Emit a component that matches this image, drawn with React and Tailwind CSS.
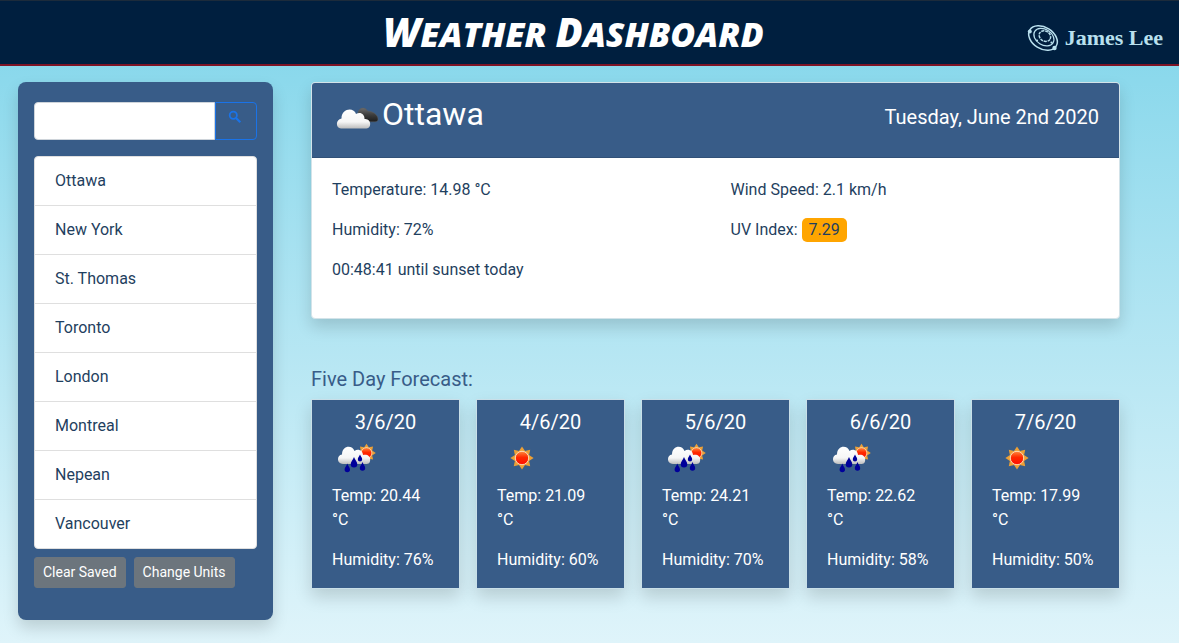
const cities = ["Ottawa", "New York", "St. Thomas", "Toronto", "London", "Montreal", "Nepean", "Vancouver"];

const forecast = [
  { date: "3/6/20", icon: "rain", temp: "20.44", humidity: 76 },
  { date: "4/6/20", icon: "sun", temp: "21.09", humidity: 60 },
  { date: "5/6/20", icon: "rain", temp: "24.21", humidity: 70 },
  { date: "6/6/20", icon: "rain", temp: "22.62", humidity: 58 },
  { date: "7/6/20", icon: "sun", temp: "17.99", humidity: 50 },
];

const SHADOW = "shadow-[0_8px_16px_rgba(0,0,0,0.15)]";
const RAY_ANGLES = [0, 45, 90, 135, 180, 225, 270, 315];

function Gradients() {
  return (
    <svg width="0" height="0" className="absolute" aria-hidden="true">
      <defs>
        <linearGradient id="cloud" x1="0" y1="0" x2="0" y2="1">
          <stop offset="0" stopColor="#ffffff" />
          <stop offset="0.65" stopColor="#f6f6f6" />
          <stop offset="1" stopColor="#bdbdbd" />
        </linearGradient>
        <linearGradient id="darkCloud" x1="0" y1="0" x2="0" y2="1">
          <stop offset="0" stopColor="#6c6c6c" />
          <stop offset="0.5" stopColor="#3c3c3c" />
          <stop offset="1" stopColor="#1d1d1d" />
        </linearGradient>
        <linearGradient id="sunDisc" x1="0" y1="0" x2="0" y2="1">
          <stop offset="0" stopColor="#ff8a3c" />
          <stop offset="0.45" stopColor="#ff2a00" />
          <stop offset="1" stopColor="#ff0d00" />
        </linearGradient>
      </defs>
    </svg>
  );
}

function SunShape() {
  return (
    <g>
      {RAY_ANGLES.map((a) => (
        <path key={a} d="M-3 -7 L0 -11.6 L3 -7 Z" fill="#eda035" transform={`rotate(${a})`} />
      ))}
      <circle r="7.6" fill="#f5a940" />
      <circle r="6.7" fill="url(#sunDisc)" stroke="#ffe3c4" strokeWidth="0.9" />
    </g>
  );
}

function WeatherIcon({ kind }) {
  return (
    <svg viewBox="0 1 50 50" className="block size-[50px] shrink-0" role="img" aria-label={kind}>
      {kind === "sun" && (
        <g transform="translate(25 25)">
          <SunShape />
        </g>
      )}
      {kind === "rain" && (
        <g>
          <g transform="translate(34.5 20) scale(0.8)">
            <SunShape />
          </g>
          <path
            d="M11 31 C4.500 31 4.500 22 10 21.500 C10 12 20.500 11.500 22.500 18 C26 15 31 17.500 31 22 C35 21 38.500 23 38.200 27 C38 30 36.500 31 34.500 31 Z"
            fill="url(#cloud)"
          />
          <g fill="#00009a">
            <path d="M22 24 C23 27 25.300 28.800 25.300 31.300 A3.300 3.300 0 0 1 18.700 31.300 C18.700 28.800 21 27 22 24 Z" />
            <path d="M28 21.500 C28.700 23.500 30.200 24.500 30.200 26.200 A2.200 2.200 0 0 1 25.800 26.200 C25.800 24.500 27.300 23.500 28 21.500 Z" />
            <path d="M15.300 30.500 C16.100 33 18 34.500 18 36.500 A2.700 2.700 0 0 1 12.600 36.500 C12.600 34.500 14.500 33 15.300 30.500 Z" />
            <path d="M30.500 29 C31.300 31.500 33.200 33 33.200 35 A2.700 2.700 0 0 1 27.800 35 C27.800 33 29.700 31.500 30.500 29 Z" />
          </g>
        </g>
      )}
      {kind === "clouds" && (
        <g transform="translate(0 -0.4)">
          <path
            d="M26 20 C26 14 33.500 12.500 35.500 17.500 C41 17.500 46 21.500 46 25.500 C46 27.500 45 28.200 43 28.200 L32 28.200 Z"
            fill="url(#darkCloud)"
            stroke="#5d5d5d"
            strokeWidth="0.5"
          />
          <path
            d="M9 34.800 C3.500 34.800 3.500 26 9.500 25 C9.500 14.500 22 13.500 24 20.500 C28 17.500 33 20.500 32.500 25.500 C39.500 24.500 40 34.800 34.500 34.800 Z"
            fill="url(#cloud)"
          />
        </g>
      )}
    </svg>
  );
}

function SearchIcon() {
  return (
    <svg viewBox="0 0 16 16" className="size-4" fill="none" stroke="currentColor" aria-hidden="true">
      <circle cx="6.300" cy="6.300" r="3.600" strokeWidth="1.800" />
      <path d="M9 9 L13.300 13.300" strokeWidth="2.200" />
    </svg>
  );
}

function OrbitLogo() {
  return (
    <svg viewBox="0 0 32 28" className="h-7 w-8 shrink-0" fill="none" stroke="#b9e0ee" aria-hidden="true">
      <g transform="rotate(32 16 14)">
        <ellipse cx="16" cy="14" rx="15.500" ry="10.800" strokeWidth="1.500" />
        <ellipse cx="16.300" cy="12.800" rx="10.800" ry="7.800" strokeWidth="1.200" />
        <ellipse cx="16.600" cy="11.400" rx="6" ry="5" strokeWidth="1.500" strokeDasharray="3 0.800" />
      </g>
      <g fill="#b9e0ee" stroke="none">
        <circle cx="2.800" cy="7.500" r="2" />
        <circle cx="27.500" cy="24" r="2.200" />
        <circle cx="10" cy="16.500" r="1.100" />
        <circle cx="24.500" cy="18.500" r="1.100" />
      </g>
    </svg>
  );
}

function Header() {
  return (
    <header className="flex h-[66px] items-center border-t border-b-2 border-t-[#1c2b3b] border-b-[#7d1426] bg-[#001f3f] pr-4 pl-[120px]">
      <h1 className="flex-1 text-center font-['Open_Sans',sans-serif] text-[34px] leading-[48px] font-extrabold whitespace-nowrap text-white uppercase italic">
        <span className="text-[40px]">W</span>eather <span className="text-[40px]">D</span>ashboard
      </h1>
      <a href="#home" className="flex items-center gap-1.5 pt-2.5 text-[#b9e0ee]">
        <OrbitLogo />
        <span className="font-['Liberation_Serif',serif] text-[22px] leading-7 font-bold">James Lee</span>
      </a>
    </header>
  );
}

function Sidebar() {
  return (
    <aside className={`w-[255px] shrink-0 rounded-lg bg-[#385c88] px-4 pt-5 pb-8 ${SHADOW}`}>
      <form className="flex h-[38px]" onSubmit={(e) => e.preventDefault()}>
        <input
          type="text"
          aria-label="City"
          className="min-w-0 flex-1 rounded-l border border-[#ced4da] bg-white px-3 text-base text-[#1f3f60] outline-none"
        />
        <button
          type="submit"
          aria-label="Search"
          className="flex w-[42px] justify-center rounded-r border border-[#1a73e8] pt-1.5 pr-0.5 text-[#1a73e8]"
        >
          <SearchIcon />
        </button>
      </form>
      <ul className="mt-4 divide-y divide-[#dfdfdf] rounded border border-[#dfdfdf] bg-white">
        {cities.map((city) => (
          <li key={city}>
            <button type="button" className="block h-12 w-full px-5 text-left text-base">
              {city}
            </button>
          </li>
        ))}
      </ul>
      <div className="mt-2 flex gap-2 text-sm leading-[21px] text-white">
        <button type="button" className="h-[31px] rounded-[3px] border border-[#6c757d] bg-[#6c757d] px-2 whitespace-nowrap">
          Clear Saved
        </button>
        <button type="button" className="h-[31px] rounded-[3px] border border-[#6c757d] bg-[#6c757d] px-2 whitespace-nowrap">
          Change Units
        </button>
      </div>
    </aside>
  );
}

function CurrentWeather() {
  return (
    <section className={`rounded border border-[#d3e3e9] bg-white ${SHADOW}`}>
      <div className="flex justify-between rounded-t-[3px] border-b border-[#315178] bg-[#385c88] px-5 py-3 text-white">
        <div className="flex">
          <WeatherIcon kind="clouds" />
          <h2 className="text-[32px] leading-[38px]">Ottawa</h2>
        </div>
        <p className="pt-2.5 text-xl leading-6">Tuesday, June 2nd 2020</p>
      </div>
      <div className="grid grid-cols-2 gap-[30px] p-5">
        <div className="flex flex-col gap-4 pb-4">
          <p>Temperature: 14.98 °C</p>
          <p>Humidity: 72%</p>
          <p>00:48:41 until sunset today</p>
        </div>
        <div className="flex flex-col gap-4">
          <p>Wind Speed: 2.1 km/h</p>
          <p>
            UV Index: <span className="inline-block rounded-[5px] bg-[#ffa500] px-[7px]">7.29</span>
          </p>
        </div>
      </div>
    </section>
  );
}

function Forecast() {
  return (
    <section className="mt-12">
      <h2 className="mb-2 text-xl leading-6 text-[#385c88]">Five Day Forecast:</h2>
      <div className="grid grid-cols-5 gap-4">
        {forecast.map((day) => (
          <article key={day.date} className={`border border-[#c9dfe8] bg-[#385c88] px-5 pt-2.5 pb-4 text-white ${SHADOW}`}>
            <h3 className="text-center text-xl leading-6">{day.date}</h3>
            <WeatherIcon kind={day.icon} />
            <p className="mb-4">Temp: {day.temp} °C</p>
            <p>Humidity: {day.humidity}%</p>
          </article>
        ))}
      </div>
    </section>
  );
}

export default function App() {
  return (
    <div className="min-h-screen bg-linear-to-b from-[#7fd5ea] to-[#dff4fa] font-['Roboto',sans-serif] text-base leading-6 text-[#1f3f60]">
      <Gradients />
      <Header />
      <main className="flex items-start gap-[38px] pt-4 pr-[59px] pb-5 pl-[18px]">
        <Sidebar />
        <div className="min-w-0 flex-1">
          <CurrentWeather />
          <Forecast />
        </div>
      </main>
    </div>
  );
}
